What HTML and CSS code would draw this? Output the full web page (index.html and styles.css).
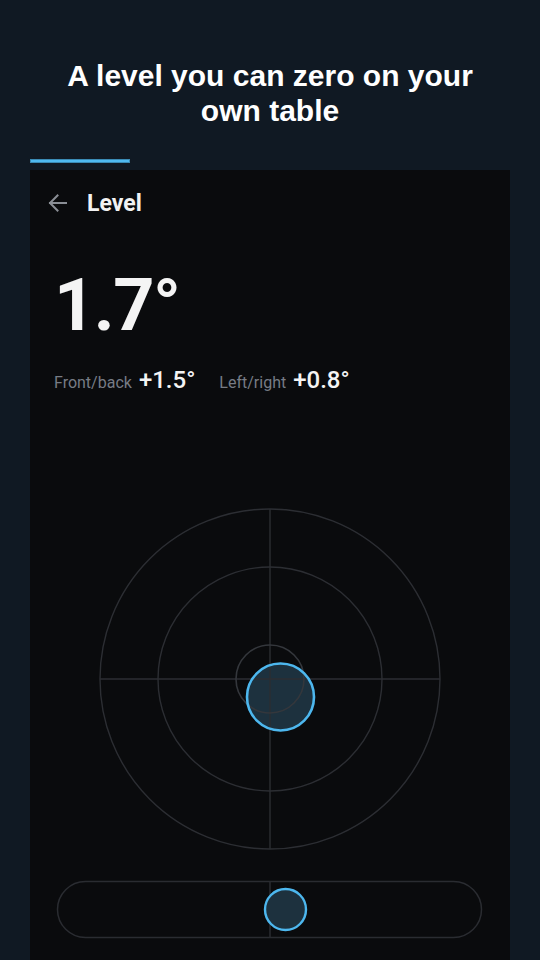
FILE: index.html
```html
<!DOCTYPE html>
<html>
<head>
<meta charset="utf-8">
<link rel="stylesheet" href="styles.css">
</head>
<body>
<h1 class="headline">A level you can zero on your<br>own table</h1>
<div class="progress"></div>
<div class="panel">
  <div class="topbar">
    <svg class="back" width="20" height="18" viewBox="0 0 20 18">
      <path d="M18 9H2M9.5 1.5L2 9l7.5 7.5" fill="none" stroke="#8a8e95" stroke-width="2" stroke-linecap="square"/>
    </svg>
    <span class="title">Level</span>
  </div>
  <div class="reading">1.7°</div>
  <div class="axes">
    <span class="label">Front/back</span><span class="value">+1.5°</span>
    <span class="label second">Left/right</span><span class="value">+0.8°</span>
  </div>
  <svg class="target" width="480" height="360" viewBox="0 0 480 360">
    <circle cx="250.5" cy="198" r="33.5" fill="#1d313e"/>
    <g fill="none" stroke="#2c2e33" stroke-width="1.4">
      <circle cx="240" cy="180" r="170"/>
      <circle cx="240" cy="180" r="112"/>
      <line x1="70" y1="180" x2="410" y2="180"/>
      <line x1="240" y1="10" x2="240" y2="350"/>
    </g>
    <circle cx="240" cy="180" r="34" fill="none" stroke="#34373c" stroke-width="1.6"/>
    <circle cx="250.5" cy="198" r="33.5" fill="none" stroke="#4db7ee" stroke-width="2.6"/>
  </svg>
  <svg class="pill" width="480" height="60" viewBox="0 0 480 60">
    <rect x="27.5" y="1.5" width="424" height="56" rx="28" fill="none" stroke="#2a2c31" stroke-width="1.5"/>
    <line x1="240" y1="1.5" x2="240" y2="57.5" stroke="#2a2c31" stroke-width="1.5"/>
    <circle cx="255.5" cy="29.5" r="20.5" fill="#1d313e" stroke="#4db7ee" stroke-width="2.4"/>
  </svg>
</div>
</body>
</html>
```
FILE: styles.css
```css
html, body {
  margin: 0;
  padding: 0;
}
body {
  background: #101923;
  width: 540px;
  height: 960px;
  overflow: hidden;
  font-family: Roboto, "Liberation Sans", sans-serif;
}
.headline {
  margin: 0;
  padding-top: 58px;
  text-align: center;
  font-family: "Liberation Sans", Arial, sans-serif;
  font-weight: bold;
  font-size: 30px;
  line-height: 35px;
  color: #ffffff;
}
.progress {
  margin: 31px 0 0 30px;
  width: 100px;
  height: 4px;
  background: #4fb9ef;
  border: 0.5px solid #3b8bb5;
  box-sizing: border-box;
}
.panel {
  margin: 7px 30px 0;
  height: 790px;
  background: #0a0b0d;
  display: flex;
  flex-direction: column;
}
.topbar {
  height: 66px;
  display: flex;
  align-items: center;
  padding-left: 18px;
}
.back {
  display: block;
}
.title {
  margin-left: 19px;
  font-size: 23px;
  font-weight: 700;
  color: #f2f2f2;
}
.reading {
  margin: 34px 0 0 24px;
  font-size: 72px;
  line-height: 72px;
  font-weight: 700;
  letter-spacing: -1.5px;
  color: #f4f4f4;
}
.axes {
  margin: 26px 0 0 24px;
  display: flex;
  align-items: baseline;
  line-height: 24px;
}
.label {
  font-size: 16px;
  color: #777c85;
}
.label.second {
  margin-left: 24px;
}
.value {
  margin-left: 7px;
  font-size: 24px;
  font-weight: 500;
  color: #f4f4f4;
}
.target {
  display: block;
  margin-top: 104px;
}
.pill {
  display: block;
  margin-top: 21px;
}
```
